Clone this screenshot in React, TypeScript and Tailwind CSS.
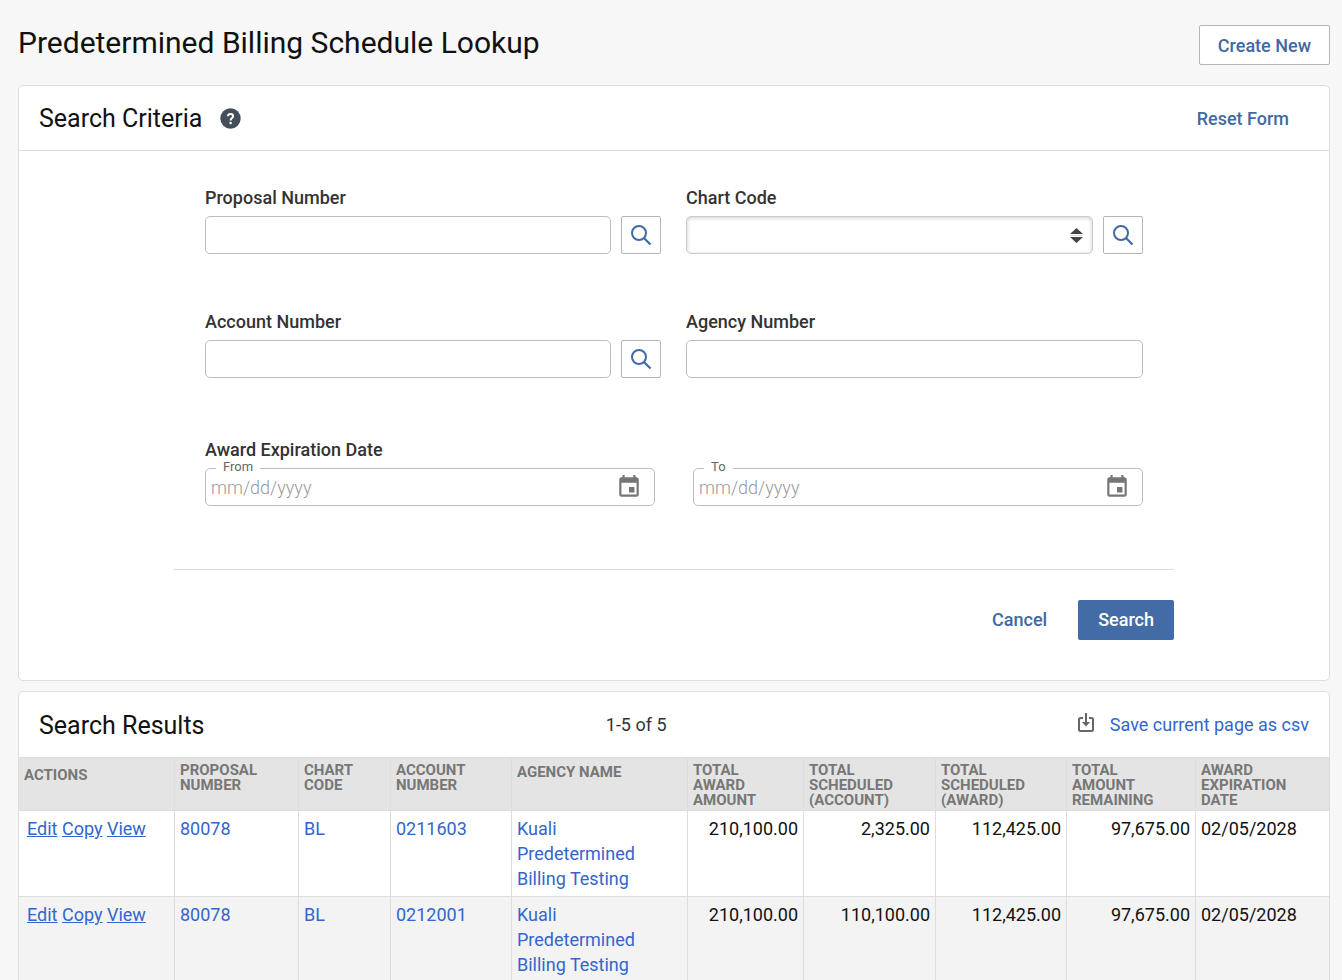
const results = [
  {
    proposal: "80078",
    chart: "BL",
    account: "0211603",
    agency: "Kuali Predetermined Billing Testing",
    awardTotal: "210,100.00",
    scheduledAccount: "2,325.00",
    scheduledAward: "112,425.00",
    remaining: "97,675.00",
    expires: "02/05/2028",
  },
  {
    proposal: "80078",
    chart: "BL",
    account: "0212001",
    agency: "Kuali Predetermined Billing Testing",
    awardTotal: "210,100.00",
    scheduledAccount: "110,100.00",
    scheduledAward: "112,425.00",
    remaining: "97,675.00",
    expires: "02/05/2028",
  },
];

const columns = [
  { title: "Actions", col: "w-[156px]", pad: "pt-[10px]" },
  { title: "Proposal Number", col: "w-[124px]", pad: "pt-[5px]" },
  { title: "Chart Code", col: "w-[92px]", pad: "pt-[5px]" },
  { title: "Account Number", col: "w-[121px]", pad: "pt-[5px]" },
  { title: "Agency Name", col: "w-[176px]", pad: "pt-[7px]" },
  { title: "Total Award Amount", col: "w-[116px]", pad: "pt-[5px]" },
  { title: "Total Scheduled (Account)", col: "w-[132px]", pad: "pt-[5px]" },
  { title: "Total Scheduled (Award)", col: "w-[131px]", pad: "pt-[5px]" },
  { title: "Total Amount Remaining", col: "w-[129px]", pad: "pt-[5px]" },
  { title: "Award Expiration Date", col: "w-[133px]", pad: "pt-[5px]" },
];

const inputClass =
  "h-[38px] w-full min-w-0 flex-1 rounded-[5px] border border-[#bdbdbd] bg-white px-[6px] text-lg";
const cellClass = "border-r border-b border-[#dddddd] py-[5px] pl-[5px] last:border-r-0";

function LookupButton({ label }: { label: string }) {
  return (
    <button
      type="button"
      aria-label={label}
      className="flex h-[38px] w-10 shrink-0 items-center justify-center rounded-[2px] border border-[#b5b5b5] bg-white"
    >
      <svg width="22" height="22" viewBox="0 0 22 22" fill="none" stroke="#4169a8">
        <circle cx="9" cy="9" r="7" strokeWidth="2" />
        <path d="M14 14l6.500 6.500" strokeWidth="2.200" />
      </svg>
    </button>
  );
}

function FieldLabel({ htmlFor, children }: { htmlFor: string; children: string }) {
  return (
    <label htmlFor={htmlFor} className="mb-[6px] block leading-6 font-medium">
      {children}
    </label>
  );
}

function DateField({ id, label }: { id: string; label: string }) {
  return (
    <div className="relative flex h-[38px] items-center rounded-[5px] border border-[#bdbdbd] pr-3">
      <label
        htmlFor={id}
        className="absolute -top-[10px] left-[10px] bg-white px-[7px] text-[13px] leading-4 text-[#666666]"
      >
        {label}
      </label>
      <input
        id={id}
        type="text"
        placeholder="mm/dd/yyyy"
        className="h-full min-w-0 flex-1 rounded-[5px] px-[5px] text-lg font-light outline-none placeholder:text-[#999999]"
      />
      <button type="button" aria-label={`Choose ${label} date`} className="shrink-0">
        <svg width="26" height="26" viewBox="0 0 24 24" fill="#757575">
          <path d="M17 12h-5v5h5v-5zM16 1v2H8V1H6v2H5c-1.11 0-1.99.9-1.99 2L3 19c0 1.1.89 2 2 2h14c1.1 0 2-.9 2-2V5c0-1.1-.9-2-2-2h-1V1h-2zm3 18H5V8h14v11z" />
        </svg>
      </button>
    </div>
  );
}

function SearchForm() {
  return (
    <section className="rounded-[5px] border border-[#dddddd] bg-white">
      <header className="flex h-[65px] items-center justify-between border-b border-[#dddddd] pr-10 pl-5">
        <div className="flex items-center gap-[18px]">
          <h2 className="pt-[2px] text-[25px] leading-8 text-[#111111]">Search Criteria</h2>
          <button type="button" aria-label="Help">
            <svg width="21" height="21" viewBox="0 0 21 21" fill="none">
              <circle cx="10.5" cy="10.5" r="10.2" fill="#434f5b" />
              <path
                d="M8 8.300C8 6.700 9.100 6 10.500 6C12 6 13.100 6.900 13.100 8.200C13.100 10 10.600 10 10.600 12.400"
                stroke="#ffffff"
                strokeWidth="2"
              />
              <circle cx="10.600" cy="15" r="1.250" fill="#ffffff" />
            </svg>
          </button>
        </div>
        <button type="button" className="pt-[2px] font-medium text-[#4169a3]">
          Reset Form
        </button>
      </header>
      <form className="mx-auto max-w-[1000px] pb-10" onSubmit={(e) => e.preventDefault()}>
        <div className="px-[31px] pt-[35px]">
          <div className="grid grid-cols-[456fr_457fr] gap-x-[25px] gap-y-14">
            <div>
              <FieldLabel htmlFor="proposalNumber">Proposal Number</FieldLabel>
              <div className="flex gap-[10px]">
                <input id="proposalNumber" type="text" className={inputClass} />
                <LookupButton label="Look up proposal" />
              </div>
            </div>
            <div>
              <FieldLabel htmlFor="chartCode">Chart Code</FieldLabel>
              <div className="flex gap-[10px]">
                <div className="relative flex-1">
                  <select
                    id="chartCode"
                    className="h-[38px] w-full appearance-none rounded-[5px] border border-[#cccccc] bg-white px-[6px] text-lg shadow-[inset_0_1px_4px_rgba(0,0,0,0.2)]"
                  >
                    <option value=""></option>
                    <option value="BL">BL</option>
                  </select>
                  <svg
                    className="pointer-events-none absolute top-3 right-[10px]"
                    width="13"
                    height="15"
                    viewBox="0 0 13 15"
                  >
                    <path d="M6.500 0L13 6H0zM6.500 15L0 9h13z" fill="#444444" />
                    <path d="M0 7.500h13" stroke="#dddddd" />
                  </svg>
                </div>
                <LookupButton label="Look up chart" />
              </div>
            </div>
            <div>
              <FieldLabel htmlFor="accountNumber">Account Number</FieldLabel>
              <div className="flex gap-[10px]">
                <input id="accountNumber" type="text" className={inputClass} />
                <LookupButton label="Look up account" />
              </div>
            </div>
            <div>
              <FieldLabel htmlFor="agencyNumber">Agency Number</FieldLabel>
              <div className="flex">
                <input id="agencyNumber" type="text" className={inputClass} />
              </div>
            </div>
          </div>
          <div role="group" aria-labelledby="expirationLabel" className="mt-[60px]">
            <p id="expirationLabel" className="mb-[6px] leading-6 font-medium">
              Award Expiration Date
            </p>
            <div className="grid grid-cols-2 gap-[38px]">
              <DateField id="expirationFrom" label="From" />
              <DateField id="expirationTo" label="To" />
            </div>
          </div>
        </div>
        <div className="mt-[63px] flex items-center justify-end gap-[31px] border-t border-[#dddddd] pt-[30px]">
          <button type="button" className="font-medium text-[#4169a3]">
            Cancel
          </button>
          <button
            type="submit"
            className="h-10 rounded-[2px] bg-[#436ba5] px-5 font-medium text-white"
          >
            Search
          </button>
        </div>
      </form>
    </section>
  );
}

function SearchResults() {
  return (
    <section className="mt-[10px] rounded-[5px] border border-[#dddddd] bg-white">
      <header className="flex h-[65px] items-center justify-between px-5">
        <h2 className="pt-[2px] text-[25px] leading-8 text-[#111111]">Search Results</h2>
        <span>1-5 of 5</span>
        <a href="#csv" className="flex items-center gap-4 pl-[10px] text-[#3366cc]">
          <svg
            className="mb-1"
            width="16"
            height="20"
            viewBox="0 0 16 20"
            fill="none"
            stroke="#666666"
          >
            <path
              d="M5 5H2.500C1.600 5 1 5.600 1 6.500V16.500C1 17.400 1.600 18 2.500 18H13.500C14.400 18 15 17.400 15 16.500V6.500C15 5.600 14.400 5 13.500 5H11"
              strokeWidth="2"
            />
            <path d="M8 0v11" strokeWidth="2" />
            <path d="M4 9h8l-4 4.500z" fill="#666666" stroke="none" />
          </svg>
          Save current page as csv
        </a>
      </header>
      <table className="w-full table-fixed border-separate border-spacing-0 border-t border-[#dddddd] text-lg">
        <thead>
          <tr>
            {columns.map((c) => (
              <th
                key={c.title}
                className={`${c.col} ${c.pad} border-r border-b border-[#dddddd] bg-[#e4e4e4] pr-5 pb-[2px] pl-[5px] text-left align-top text-[15px] leading-[15px] font-bold text-[#777777] uppercase last:border-r-0`}
              >
                {c.title}
              </th>
            ))}
          </tr>
        </thead>
        <tbody className="leading-[25px] text-[#111111]">
          {results.map((r) => (
            <tr key={r.account} className="align-top even:bg-[#f3f3f3]">
              <td className="border-r border-b border-[#dddddd] py-[5px] pr-[5px] pl-2 text-[#3366cc]">
                <a href="#edit" className="underline">Edit</a>{" "}
                <a href="#copy" className="underline">Copy</a>{" "}
                <a href="#view" className="underline">View</a>
              </td>
              <td className={cellClass}>
                <a href="#proposal" className="text-[#3366cc]">{r.proposal}</a>
              </td>
              <td className={cellClass}>
                <a href="#chart" className="text-[#3366cc]">{r.chart}</a>
              </td>
              <td className={cellClass}>
                <a href="#account" className="text-[#3366cc]">{r.account}</a>
              </td>
              <td className={`${cellClass} pr-5`}>
                <a href="#agency" className="text-[#3366cc]">{r.agency}</a>
              </td>
              <td className={`${cellClass} pr-[5px] text-right`}>{r.awardTotal}</td>
              <td className={`${cellClass} pr-[5px] text-right`}>{r.scheduledAccount}</td>
              <td className={`${cellClass} pr-[5px] text-right`}>{r.scheduledAward}</td>
              <td className={`${cellClass} pr-[5px] text-right`}>{r.remaining}</td>
              <td className={cellClass}>{r.expires}</td>
            </tr>
          ))}
        </tbody>
      </table>
    </section>
  );
}

export default function App() {
  return (
    <main className="h-screen overflow-hidden bg-[#f7f7f7] pr-3 pl-[18px] font-[Roboto,sans-serif] text-lg text-[#333333]">
      <div className="flex items-start justify-between pt-[25px] pb-5">
        <h1 className="text-3xl leading-9 text-[#111111]">Predetermined Billing Schedule Lookup</h1>
        <button
          type="button"
          className="h-10 rounded-[2px] border border-[#b5b5b5] bg-white px-[18px] pt-[2px] font-medium text-[#4169a3]"
        >
          Create New
        </button>
      </div>
      <SearchForm />
      <SearchResults />
    </main>
  );
}
